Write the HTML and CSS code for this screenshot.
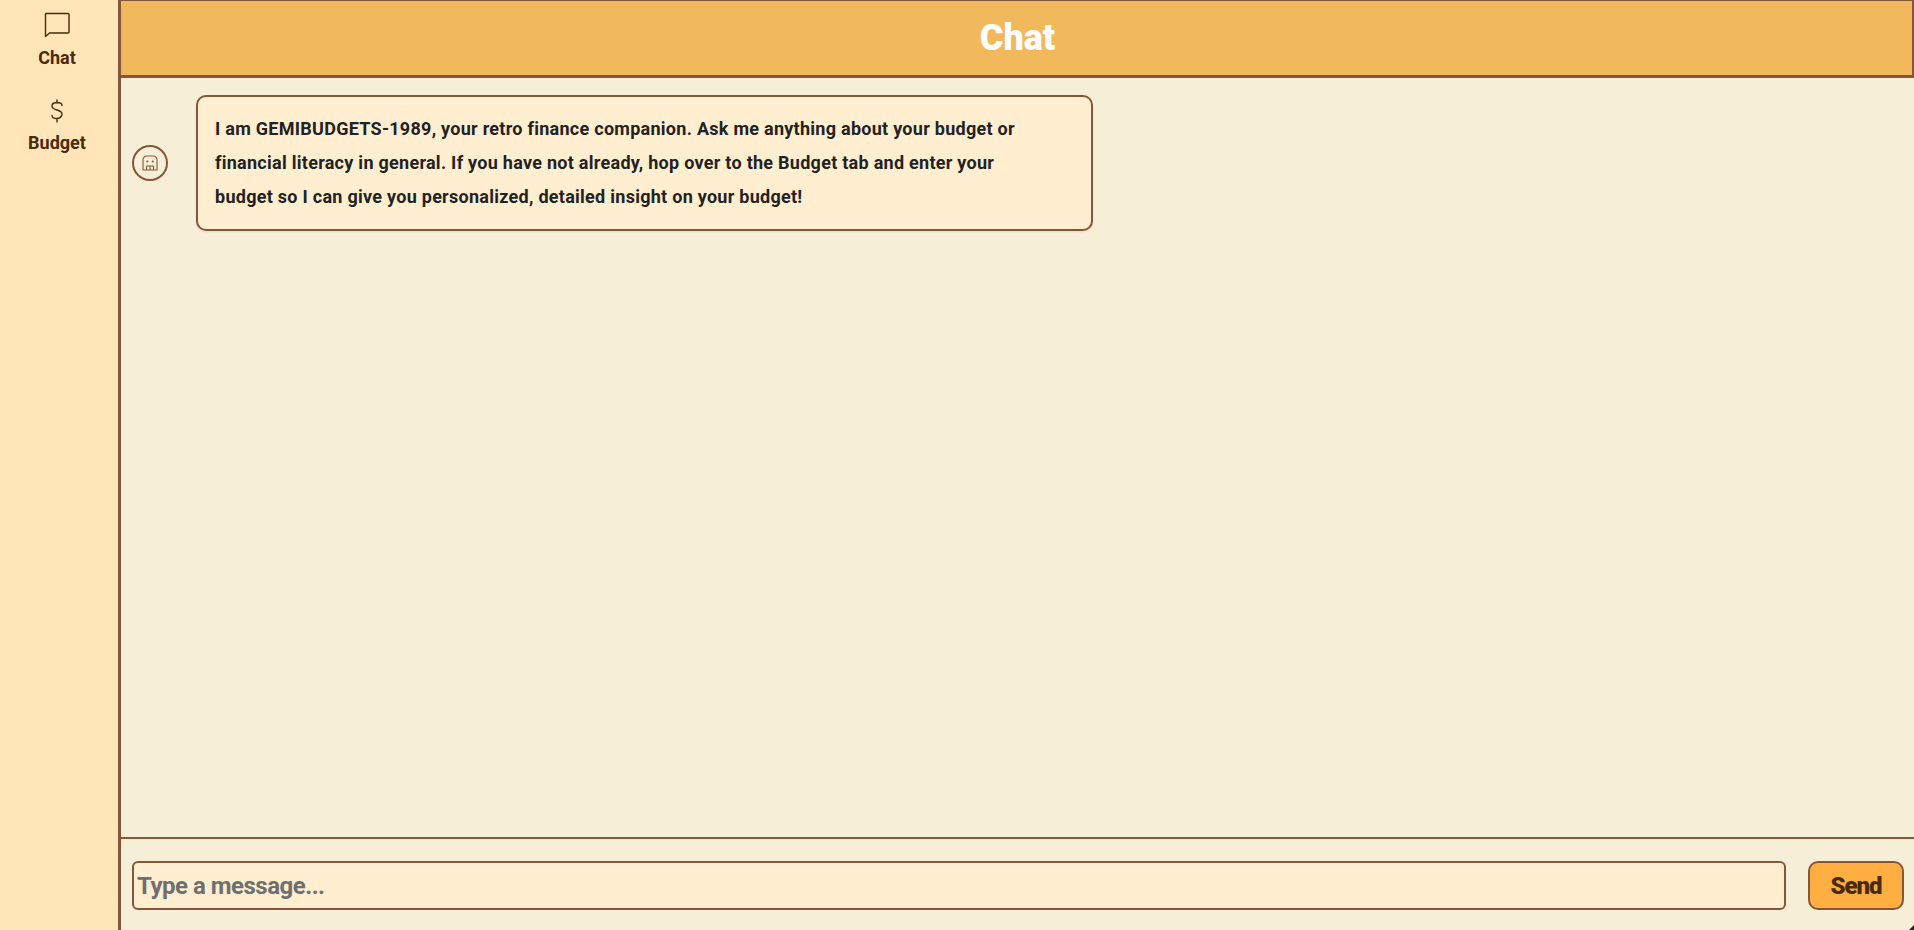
FILE: index.html
```html
<!DOCTYPE html>
<html lang="en">
<head>
<meta charset="utf-8">
<title>Chat</title>
<link rel="stylesheet" href="styles.css">
</head>
<body>
<div class="app">
  <nav class="sidebar">
    <a class="nav-item">
      <svg class="nav-icon" viewBox="0 0 28 28" fill="none" stroke="currentColor" stroke-width="1.4" stroke-linejoin="round" stroke-linecap="round"><path d="M2.500 4v22.500L6.500 23H25a1 1 0 0 0 1-1V4.500a1 1 0 0 0-1-1H3a.5.5 0 0 0-.5.5z"/></svg>
      <span>Chat</span>
    </a>
    <a class="nav-item">
      <svg class="nav-icon" viewBox="0 0 28 28" fill="none" stroke="currentColor" stroke-width="1.4" stroke-linecap="round" stroke-linejoin="round"><path d="M14 5v3M14 24v3M19 10.500c0-1.900-2.200-3-5-3-2.800 0-5 1.300-5 3.500s2 3.200 5 4 5 1.900 5 4.100-2.200 4.400-5 4.400-5-1.200-5-3"/></svg>
      <span>Budget</span>
    </a>
  </nav>
  <main class="main">
    <header class="header"><h1>Chat</h1></header>
    <section class="messages">
      <div class="message">
        <div class="avatar">
          <svg viewBox="0 0 16 16" fill="none" stroke="currentColor" stroke-width="1.1" stroke-linejoin="round"><path d="M1 15V4.500A3.500 3.500 0 0 1 4.500 1h7A3.500 3.500 0 0 1 15 4.500V15z"/><path d="M4.500 15v-4h7v4M8 11v4"/><circle cx="5.300" cy="6.500" r="1" fill="currentColor" stroke="none"/><circle cx="10.700" cy="6.500" r="1" fill="currentColor" stroke="none"/></svg>
        </div>
        <div class="bubble">I am GEMIBUDGETS-1989, your retro finance companion. Ask me anything about your budget or financial literacy in general. If you have not already, hop over to the Budget tab and enter your budget so I can give you personalized, detailed insight on your budget!</div>
      </div>
    </section>
    <form class="composer">
      <input class="composer-input" type="text" placeholder="Type a message...">
      <button class="send" type="button">Send</button>
    </form>
  </main>
</div>
<div class="corner"></div>
</body>
</html>
```

FILE: styles.css
```css
* { box-sizing: border-box; }
html, body { height: 100%; margin: 0; overflow: hidden; }
body { font-family: Roboto, "Liberation Sans", sans-serif; font-weight: 700; color: #4a2a0a; background: #f7eed8; }
.app { display: flex; height: 930px; }
.sidebar { width: 118px; flex: none; background: #ffe5b8; display: flex; flex-direction: column; align-items: center; padding: 10px 4px 0 0; gap: 26px; }
.nav-item { display: flex; flex-direction: column; align-items: center; gap: 9px; font-size: 18px; line-height: 22px; color: #4a2a0a; }
.nav-icon { width: 28px; height: 28px; display: block; }
.main { flex: 1; min-width: 0; display: flex; flex-direction: column; border-left: 3px solid #85573a; }
.header { height: 78px; flex: none; padding-left: 2px; background: #f2b95c; border-top: 1px solid #85573a; border-right: 2px solid #85573a; border-bottom: 3px solid #85573a; display: flex; align-items: center; justify-content: center; }
.header h1 { margin: 0; color: #fff; font-size: 36px; font-weight: 900; line-height: 1; }
.messages { flex: 1; min-height: 0; padding: 17px 11px; }
.message { display: flex; align-items: center; gap: 28px; }
.avatar { width: 36px; height: 36px; flex: none; border: 2px solid #85573a; border-radius: 50%; color: #85573a; display: flex; align-items: center; justify-content: center; }
.avatar svg { width: 16px; height: 16px; display: block; }
.bubble { width: 897px; background: #ffefd0; color: #222222; border: 2px solid #85573a; border-radius: 10px; padding: 15px 60px 15px 17px; font-size: 18px; line-height: 34px; letter-spacing: .27px; box-shadow: 0 1px 2px rgba(0,0,0,.08); }
.composer { flex: none; height: 93px; border-top: 2px solid #85573a; display: flex; align-items: flex-start; padding: 22px 10px 0 11px; gap: 22px; }
.composer-input { flex: 1; min-width: 0; height: 49px; background: #ffefd0; border: 2px solid #85573a; border-radius: 6px; padding: 0 3px; font: 700 24px Roboto, "Liberation Sans", sans-serif; letter-spacing: -.5px; color: #222; outline: none; }
.composer-input::placeholder { color: #6f6f6f; opacity: 1; }
.send { width: 96px; height: 49px; flex: none; background: #ffae42; color: #4a2a0a; border: 2px solid #85573a; border-radius: 10px; font: 900 24px Roboto, "Liberation Sans", sans-serif; letter-spacing: -1px; padding: 0; }
.corner { position: absolute; right: 0; bottom: 0; width: 5px; height: 5px; background: #222; clip-path: polygon(100% 0, 100% 100%, 0 100%); }
```
